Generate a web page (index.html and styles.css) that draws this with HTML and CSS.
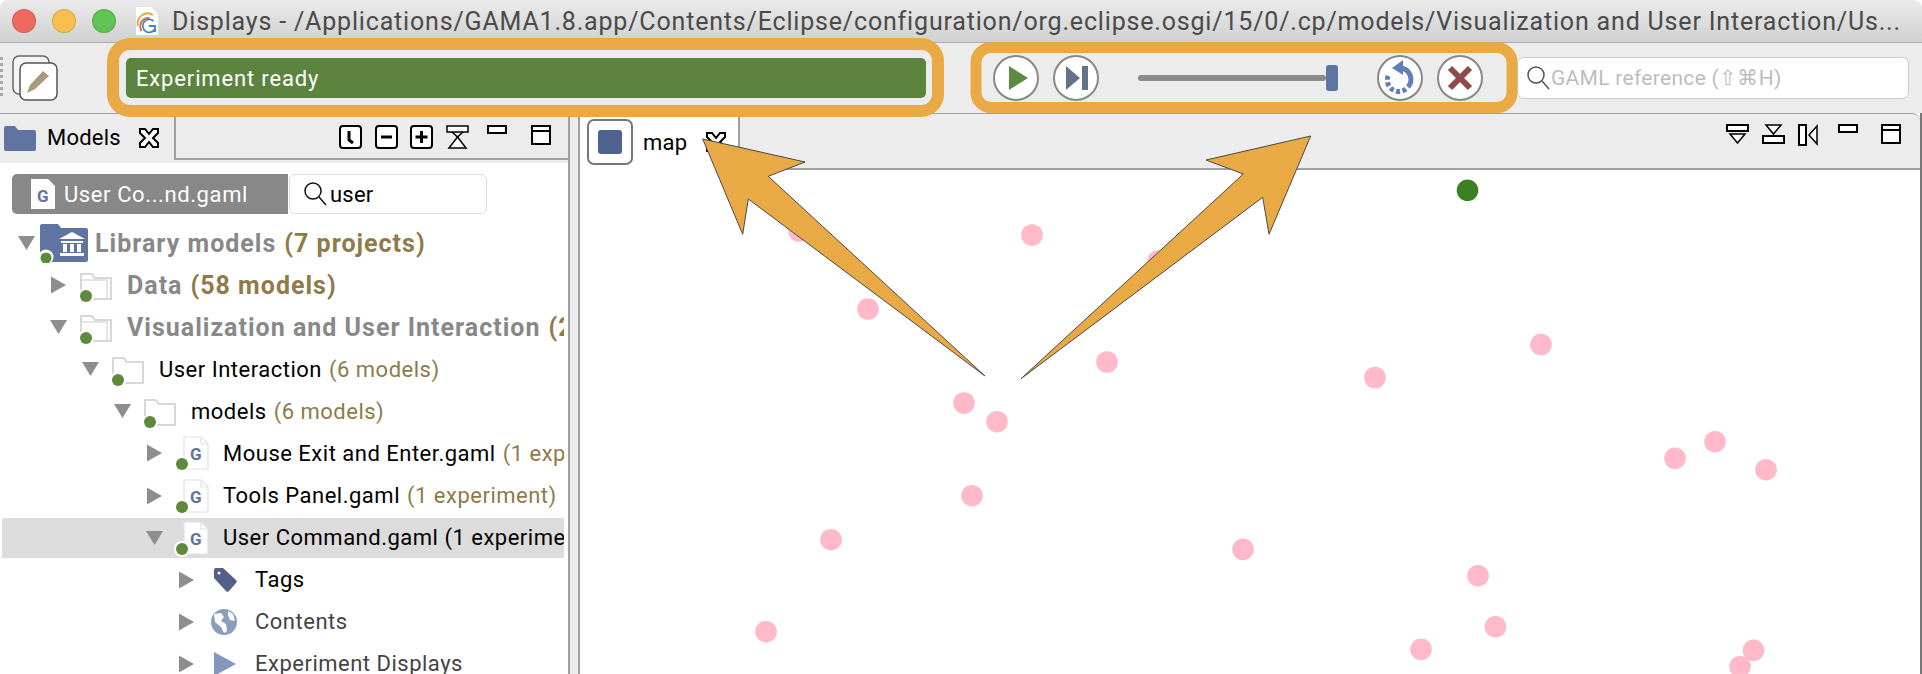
FILE: index.html
```html
<!DOCTYPE html>
<html lang="en">
<head>
<meta charset="utf-8">
<title>Displays</title>
<link rel="stylesheet" href="styles.css">
</head>
<body>
<svg class="defs" width="0" height="0" aria-hidden="true">
  <defs>
    <symbol id="x" viewBox="0 0 22 22"><path d="M2 2h5l4 5 4-5h5v4l-5 5 5 5v4h-5l-4-5-4 5H2v-4l5-5-5-5z" fill="#fff" stroke="#000" stroke-width="2"/></symbol>
    <symbol id="tw-open" viewBox="0 0 24 40"><path d="M3 13h17l-8.500 14z" fill="#8e8e8e"/></symbol>
    <symbol id="tw-closed" viewBox="0 0 24 40"><path d="M4 11.500l15 8.500-15 8.500z" fill="#8e8e8e"/></symbol>
    <symbol id="dot" viewBox="0 0 56 40"><circle cx="15" cy="31" r="8" fill="#fff"/><circle cx="15" cy="31" r="6" fill="#5e8a3c"/></symbol>
    <symbol id="folder" viewBox="0 0 56 40"><path d="M10 30V9h11l2.500 4H40v21H20" fill="#fff" stroke="#ccc" stroke-width="1.500"/></symbol>
    <symbol id="folder2" viewBox="0 0 56 40"><path d="M10 30V9h11l2.500 4H40v21H20" fill="#fff" stroke="#ccc" stroke-width="1.500"/><path d="M11 15h25v18" fill="none" stroke="#ddd" stroke-width="1.500"/></symbol>
    <symbol id="page" viewBox="0 0 56 40"><path d="M17 4h17l7 7v25H17z" fill="#fff" stroke="#dfe2e8" stroke-width="1.200"/><path d="M34 4v7h7" fill="none" stroke="#dfe2e8" stroke-width="1.200"/></symbol>
  </defs>
</svg>
<div class="window">
  <header class="titlebar">
    <div class="lights"><span class="light red"></span><span class="light yellow"></span><span class="light green"></span></div>
    <svg class="app-icon" width="24" height="28" viewBox="0 0 24 28">
      <path d="M1 0h15l7 7v21H1z" fill="#fff"/>
      <path d="M3 19a10 10 0 0 1 15-11" fill="none" stroke="#e9a23c" stroke-width="1.800"/>
      <path d="M6.500 24a10 10 0 0 1-1-7 9 9 0 0 1 9-6" fill="none" stroke="#d8693a" stroke-width="1.800"/>
      <path d="M20 22a6.500 6.500 0 1 1-1.500-8" fill="none" stroke="#3f83c0" stroke-width="1.800"/>
      <path d="M14 19h6v6" fill="none" stroke="#3f83c0" stroke-width="1.800"/>
    </svg>
    <span class="title">Displays - /Applications/GAMA1.8.app/Contents/Eclipse/configuration/org.eclipse.osgi/15/0/.cp/models/Visualization and User Interaction/Us...</span>
  </header>

  <div class="toolbar">
    <span class="grip"></span>
    <svg class="perspective" width="46" height="46" viewBox="0 0 46 46">
      <rect x="1" y="1" width="36" height="38" rx="6" fill="#f4f4f4" stroke="#666" stroke-width="1.500"/>
      <rect x="8" y="8" width="37" height="37" rx="6" fill="#fff" stroke="#555" stroke-width="1.500"/>
      <path d="M15 38l3-8 13-14 6 5-14 13z" fill="#a8997f"/>
    </svg>
    <div class="status">Experiment ready</div>
    <button class="round first" type="button" aria-label="Run">
      <svg viewBox="0 0 46 46"><circle cx="23" cy="23" r="22" fill="#fff" stroke="#888" stroke-width="2"/><path d="M16 11l19 12-19 12z" fill="#5c8a3f"/></svg>
    </button>
    <button class="round" type="button" aria-label="Step">
      <svg viewBox="0 0 46 46"><circle cx="23" cy="23" r="22" fill="#fff" stroke="#888" stroke-width="2"/><path d="M13 11l14 12-14 12z" fill="#637488"/><rect x="29" y="11" width="6" height="24" fill="#637488"/></svg>
    </button>
    <div class="slider"><span class="track"></span><span class="thumb"></span></div>
    <button class="round reload" type="button" aria-label="Reload">
      <svg viewBox="0 0 46 46"><circle cx="23" cy="23" r="22" fill="#fff" stroke="#888" stroke-width="2"/><path d="M24 13a11.500 11.500 0 0 1 7 19" fill="none" stroke="#5f7fb5" stroke-width="5"/><path d="M29 34a11.500 11.500 0 0 1-17-15" fill="none" stroke="#5f7fb5" stroke-width="5" stroke-dasharray="4 2.500"/><path d="M26 5v15l-11-7z" fill="#5f7fb5"/></svg>
    </button>
    <button class="round" type="button" aria-label="Stop">
      <svg viewBox="0 0 46 46"><circle cx="23" cy="23" r="22" fill="#fff" stroke="#888" stroke-width="2"/><path d="M13 13l20 20M33 13L13 33" stroke="#8f4a4a" stroke-width="6"/></svg>
    </button>
    <div class="search-box">
      <svg width="24" height="26" viewBox="0 0 24 26"><circle cx="10" cy="10" r="8" fill="none" stroke="#555" stroke-width="1.500"/><path d="M16 16l7 8" stroke="#555" stroke-width="1.500"/></svg>
      <span>GAML reference (⇧⌘H)</span>
    </div>
  </div>

  <div class="panes">
    <section class="left">
      <div class="tabbar">
        <div class="tab models-tab">
          <svg width="32" height="26" viewBox="0 0 32 26"><path d="M0 3a2 2 0 0 1 2-2h9l3 4h16a2 2 0 0 1 2 2v17a2 2 0 0 1-2 2H2a2 2 0 0 1-2-2z" fill="#5f74a0"/></svg>
          <span class="tab-label">Models</span>
          <svg class="tab-x" width="22" height="22"><use href="#x"/></svg>
        </div>
        <div class="view-tools">
          <svg class="vt" width="23" height="24" viewBox="0 0 23 24"><rect x="1" y="1" width="21" height="22" rx="3" fill="#fff" stroke="#000" stroke-width="2"/><path d="M10 6v9l4 3" fill="none" stroke="#000" stroke-width="3"/></svg>
          <svg class="vt" width="23" height="24" viewBox="0 0 23 24"><rect x="1" y="1" width="21" height="22" rx="3" fill="#fff" stroke="#000" stroke-width="2"/><path d="M6 12h11" stroke="#000" stroke-width="3"/></svg>
          <svg class="vt" width="23" height="24" viewBox="0 0 23 24"><rect x="1" y="1" width="21" height="22" rx="3" fill="#fff" stroke="#000" stroke-width="2"/><path d="M5.500 12h12M11.500 6v12" stroke="#000" stroke-width="3"/></svg>
          <svg class="vt" width="23" height="24" viewBox="0 0 23 24"><rect x="1" y="1" width="21" height="6" fill="#fff" stroke="#000" stroke-width="1.500"/><path d="M11.500 12L20 23H3z" fill="#fff" stroke="#000" stroke-width="1.500"/><path d="M6 7l5.500 5L17 7" fill="none" stroke="#000" stroke-width="1.500"/></svg>
          <svg class="vt-min" width="20" height="9" viewBox="0 0 20 9"><rect x="1" y="1" width="18" height="7" fill="#fff" stroke="#000" stroke-width="2"/></svg>
          <svg class="vt-max" width="20" height="20" viewBox="0 0 20 20"><rect x="1" y="1" width="18" height="18" fill="#fff" stroke="#000" stroke-width="2"/><path d="M1 6h18" stroke="#000" stroke-width="2"/></svg>
        </div>
      </div>
      <div class="left-body">
        <div class="selector">
          <div class="crumb">
            <svg width="26" height="32" viewBox="0 0 26 32"><path d="M1 1h17l7 7v23H1z" fill="#fff"/><text class="g" x="13" y="24" text-anchor="middle">G</text></svg>
            <span>User Co...nd.gaml</span>
          </div>
          <div class="filter">
            <svg width="24" height="26" viewBox="0 0 24 26"><circle cx="10" cy="10" r="8" fill="none" stroke="#111" stroke-width="1.500"/><path d="M16 16l7 8" stroke="#111" stroke-width="1.500"/></svg>
            <span>user</span>
          </div>
        </div>
        <div class="tree">
          <div class="row d0 strong"><svg class="tw"><use href="#tw-open"/></svg>
            <svg class="ic" viewBox="0 0 56 40"><path d="M1 3a2 2 0 0 1 2-2h16l3 4h25a2 2 0 0 1 2 2v30a2 2 0 0 1-2 2H3a2 2 0 0 1-2-2z" fill="#5f74a0"/><path d="M20 16l13-7 13 7zM22 18h22v2H22zM24 21h4v8h-4zM31 21h4v8h-4zM38 21h4v8h-4zM21 30h24v3H21z" fill="#fff"/><circle cx="7" cy="34" r="7.500" fill="#fff"/><circle cx="7" cy="35" r="5.500" fill="#5e8a3c"/></svg>
            <span class="name">Library models</span> <span class="count">(7 projects)</span></div>
          <div class="row d1 strong"><svg class="tw"><use href="#tw-closed"/></svg>
            <svg class="ic"><use href="#folder2"/><use href="#dot"/></svg>
            <span class="name">Data</span> <span class="count">(58 models)</span></div>
          <div class="row d1 strong"><svg class="tw"><use href="#tw-open"/></svg>
            <svg class="ic"><use href="#folder2"/><use href="#dot"/></svg>
            <span class="name">Visualization and User Interaction</span> <span class="count">(2</span></div>
          <div class="row d2"><svg class="tw"><use href="#tw-open"/></svg>
            <svg class="ic"><use href="#folder"/><use href="#dot"/></svg>
            <span class="name">User Interaction</span> <span class="count">(6 models)</span></div>
          <div class="row d3"><svg class="tw"><use href="#tw-open"/></svg>
            <svg class="ic"><use href="#folder"/><use href="#dot"/></svg>
            <span class="name">models</span> <span class="count">(6 models)</span></div>
          <div class="row d4"><svg class="tw"><use href="#tw-closed"/></svg>
            <svg class="ic" viewBox="0 0 56 40"><use href="#page" width="56" height="40"/><text class="g" x="29" y="27" text-anchor="middle">G</text><use href="#dot" width="56" height="40"/></svg>
            <span class="name">Mouse Exit and Enter.gaml</span> <span class="count">(1 experiment)</span></div>
          <div class="row d4"><svg class="tw"><use href="#tw-closed"/></svg>
            <svg class="ic" viewBox="0 0 56 40"><use href="#page" width="56" height="40"/><text class="g" x="29" y="27" text-anchor="middle">G</text><use href="#dot" width="56" height="40"/></svg>
            <span class="name">Tools Panel.gaml</span> <span class="count">(1 experiment)</span></div>
          <div class="row d4 selected"><svg class="tw"><use href="#tw-open"/></svg>
            <svg class="ic" viewBox="0 0 56 40"><use href="#page" width="56" height="40"/><text class="g" x="29" y="27" text-anchor="middle">G</text><use href="#dot" width="56" height="40"/></svg>
            <span class="name">User Command.gaml (1 experiment)</span></div>
          <div class="row d5"><svg class="tw"><use href="#tw-closed"/></svg>
            <svg class="ic" viewBox="0 0 56 40"><path d="M15 10a2 2 0 0 1 2-2h7l13 12a2 2 0 0 1 0 3l-7 8a2 2 0 0 1-3 0L15 18z" fill="#525f88"/><circle cx="20" cy="13" r="1.500" fill="#fff"/></svg>
            <span class="name">Tags</span></div>
          <div class="row d5"><svg class="tw"><use href="#tw-closed"/></svg>
            <svg class="ic" viewBox="0 0 56 40"><circle cx="25" cy="20" r="13" fill="#8c9cbd"/><path d="M15 12l7-1 3 4-3 4 5 3 1 7-3 2-3-6-6-5zM29 9l5 3 2 7-5-1-2-5z" fill="#fff"/></svg>
            <span class="name dim">Contents</span></div>
          <div class="row d5"><svg class="tw"><use href="#tw-closed"/></svg>
            <svg class="ic" viewBox="0 0 56 40"><path d="M15 8l22 12-22 12z" fill="#8596bb"/></svg>
            <span class="name dim">Experiment Displays</span></div>
        </div>
      </div>
    </section>
    <div class="sash"></div>
    <section class="right">
      <div class="tabbar map-bar">
        <div class="tab map-tab">
          <span class="map-icon"><span class="map-square"></span></span>
          <span class="tab-label">map</span>
          <svg class="tab-x" width="22" height="22"><use href="#x"/></svg>
        </div>
        <div class="view-tools map-tools">
          <svg class="vt" width="23" height="20" viewBox="0 0 23 20"><path d="M1 1h21v6H1z" fill="#fff" stroke="#000" stroke-width="2"/><path d="M4 10h15l-7.500 9z" fill="#fff" stroke="#000" stroke-width="1.500"/></svg>
          <svg class="vt" width="23" height="20" viewBox="0 0 23 20"><path d="M4 1h15l-7.500 9z" fill="#fff" stroke="#000" stroke-width="1.500"/><path d="M1 12h21v7H1z" fill="#fff" stroke="#000" stroke-width="2"/></svg>
          <svg class="vt" width="21" height="22" viewBox="0 0 21 22"><path d="M1 1h7v20H1z" fill="#fff" stroke="#000" stroke-width="2"/><path d="M19 2v18l-8-9z" fill="#fff" stroke="#000" stroke-width="1.500"/></svg>
          <svg class="vt-min" width="20" height="9" viewBox="0 0 20 9"><rect x="1" y="1" width="18" height="7" fill="#fff" stroke="#000" stroke-width="2"/></svg>
          <svg class="vt-max" width="20" height="20" viewBox="0 0 20 20"><rect x="1" y="1" width="18" height="18" fill="#fff" stroke="#000" stroke-width="2"/><path d="M1 6h18" stroke="#000" stroke-width="2"/></svg>
        </div>
      </div>
      <svg class="map" viewBox="580 170 1340 504" preserveAspectRatio="xMinYMin meet">
        <g fill="#ffb9c8">
          <circle cx="799" cy="231" r="10.800"/><circle cx="1032" cy="235" r="10.800"/><circle cx="1158" cy="261" r="10.800"/>
          <circle cx="868" cy="309" r="10.800"/><circle cx="1107" cy="362" r="10.800"/><circle cx="1375" cy="377.500" r="10.800"/>
          <circle cx="1541" cy="344.500" r="10.800"/><circle cx="964" cy="403" r="10.800"/><circle cx="997" cy="421.700" r="10.800"/>
          <circle cx="972" cy="495.700" r="10.800"/><circle cx="831" cy="539.700" r="10.800"/><circle cx="1243" cy="549.300" r="10.800"/>
          <circle cx="1478" cy="575.700" r="10.800"/><circle cx="766" cy="631.700" r="10.800"/><circle cx="1495.500" cy="626.700" r="10.800"/>
          <circle cx="1421" cy="649.300" r="10.800"/><circle cx="1753.500" cy="650.300" r="10.800"/><circle cx="1740" cy="666.700" r="10.800"/>
          <circle cx="1675" cy="458.300" r="10.800"/><circle cx="1715" cy="441.700" r="10.800"/><circle cx="1766" cy="469.700" r="10.800"/>
        </g>
        <circle cx="1467.500" cy="190.300" r="10.800" fill="#3b8122"/>
      </svg>
    </section>
  </div>

  <svg class="annotations" width="1922" height="674" viewBox="0 0 1922 674" aria-hidden="true">
    <rect x="113" y="44" width="825" height="67" rx="17" class="ring"/>
    <rect x="976" y="47.500" width="536" height="60" rx="15" class="ring thin"/>
    <path class="arrow" d="M702.700 139L805 162L768.300 176.300L985 376L748.300 199L742.700 234.300Z"/>
    <path class="arrow" d="M1021 378.700L1243.300 174L1206 160L1310.700 136L1269 234.300L1262.700 197.300Z"/>
  </svg>
</div>
</body>
</html>
```
FILE: styles.css
```css
* { box-sizing: border-box; }
html, body { margin: 0; padding: 0; background: #fff; overflow: hidden; }
body { font-family: Roboto, "Liberation Sans", sans-serif; color: #000; }
.defs { position: absolute; }
svg { display: block; flex: none; }

.window { position: relative; width: 1922px; height: 674px; overflow: hidden; display: flex; flex-direction: column; }

/* title bar */
.titlebar { height: 43px; flex: none; display: flex; align-items: center; padding-left: 12px; background: linear-gradient(#ebebeb, #d0d0d0); border-bottom: 1px solid #b0b0b0; border-radius: 8px 8px 0 0; }
.lights { display: flex; gap: 16px; }
.light { width: 24px; height: 24px; border-radius: 50%; border: 1px solid rgba(0,0,0,.12); }
.red { background: #ee6a5f; }
.yellow { background: #f6be4f; }
.green { background: #61c454; }
.app-icon { margin-left: 19px; }
.title { margin-left: 13px; font-size: 25px; color: #4a4a4a; white-space: nowrap; letter-spacing: .82px; }

/* main toolbar */
.toolbar { height: 70px; flex: none; display: flex; align-items: center; background: #ececec; }
.grip { width: 3px; height: 42px; margin-right: 9px; background: repeating-linear-gradient(#aaa 0 3px, transparent 3px 6px); }
.status { width: 800px; height: 40px; margin-left: 68px; padding-left: 10px; display: flex; align-items: center; background: #5c843f; border-radius: 5px; color: #fff; font-size: 22px; letter-spacing: .85px; }
.round { width: 46px; height: 46px; padding: 0; border: 0; background: none; flex: none; margin-left: 14px; }
.round svg { width: 46px; height: 46px; }
.round.first { margin-left: 67px; }
.round.reload { margin-left: 39px; }
.slider { width: 200px; height: 26px; margin-left: 39px; display: flex; align-items: center; }
.track { width: 188px; height: 6px; background: #8a8a8a; border-radius: 3px; }
.thumb { width: 12px; height: 26px; background: #5f74a0; border-radius: 3px; }
.search-box { width: 392px; height: 42px; margin-left: 34px; padding-left: 8px; display: flex; align-items: center; gap: 1px; background: #fff; border: 1px solid #ccc; border-radius: 7px; color: #bdbdbd; font-size: 21px; letter-spacing: .3px; }

/* panes */
.panes { flex: 1; display: flex; min-height: 0; }
.left { width: 568px; flex: none; display: flex; flex-direction: column; min-height: 0; }
.sash { width: 12px; flex: none; background: #ececec; border-left: 2px solid #a0a0a0; border-right: 2px solid #a0a0a0; }
.right { flex: 1; display: flex; flex-direction: column; min-width: 0; border-right: 2px solid #777; }

.tabbar { height: 50px; flex: none; display: flex; background: #ececec; border-top: 1px solid #a0a0a0; }
.tab { display: flex; align-items: center; flex: none; }
.models-tab { width: 176px; padding: 1px 0 0 4px; border-right: 2px solid #a0a0a0; margin-bottom: 3px; }
.tab-label { font-size: 22px; letter-spacing: .2px; }
.models-tab .tab-label { margin-left: 11px; }
.models-tab .tab-x { margin-left: 17px; }
.view-tools { flex: 1; display: flex; align-items: flex-start; padding-top: 11px; padding-left: 163px; border-bottom: 2px solid #a0a0a0; margin-bottom: 3px; }
.vt { margin-right: 12.500px; }
.vt-min { margin-left: 6px; }
.vt-max { margin-left: 24px; }

.left-body { flex: 1; min-height: 0; background: #fff; overflow: hidden; padding-top: 11px; }
.selector { display: flex; padding-left: 12px; height: 40px; }
.crumb { width: 276px; display: flex; align-items: center; padding-left: 18px; gap: 8px; background: #888; border-radius: 5px 0 0 5px; color: #fff; font-size: 22px; letter-spacing: .6px; }
.filter { width: 198px; margin-left: 1px; display: flex; align-items: center; gap: 3px; padding-left: 13px; background: #fff; border: 1px solid #ddd; border-radius: 6px; font-size: 22px; letter-spacing: .2px; }

.tree { margin: 9px 4px 0 2px; display: flex; flex-direction: column; gap: 2.100px; overflow: hidden; height: 460px; }
.row { height: 40px; flex: none; display: flex; align-items: center; font-size: 22px; letter-spacing: .5px; white-space: nowrap; overflow: hidden; }
.d0 { padding-left: 13px; }
.d1 { padding-left: 45px; }
.d2 { padding-left: 77px; }
.d3 { padding-left: 109px; }
.d4 { padding-left: 141px; }
.d5 { padding-left: 173px; }
.tw { width: 24px; height: 40px; }
.ic { width: 56px; height: 40px; }
.name { margin-right: 7px; }
.strong { font-weight: 700; font-size: 25px; letter-spacing: 1px; }
.strong .name { color: #888; margin-right: 8px; }
.count { color: #8f7a4a; }
.dim { color: #444; }
.selected { background: #dcdcdc; }
.g { font: 700 17px Roboto, sans-serif; fill: #5f74a0; }

/* map view */
.map-bar { height: 57px; border-radius: 0 8px 0 0; }
.map-tab { width: 160px; padding-left: 7px; border-right: 2px solid #a0a0a0; background: #fff; }
.map-icon { width: 46px; height: 46px; border: 2px solid #777; border-radius: 7px; background: #fff; display: flex; align-items: center; justify-content: center; flex: none; }
.map-square { width: 24px; height: 24px; background: #4f638f; border-radius: 3px; }
.map-tab .tab-label { margin-left: 10px; }
.map-tab .tab-x { margin-left: 18px; }
.map-tools { padding-left: 986px; margin-bottom: 0; padding-top: 10px; }
.map-tools .vt { margin-right: 13px; }
.map-tools .vt-min { margin-left: 6px; }
.map-tools .vt-max { margin-left: 23px; }
.map { width: 1340px; height: 504px; flex: none; }

/* annotation overlay */
.annotations { position: absolute; left: 0; top: 0; pointer-events: none; }
.ring { fill: none; stroke: #e9a945; stroke-width: 12; }
.ring.thin { stroke-width: 11; }
.arrow { fill: #e9a945; stroke: #4a4a4a; stroke-width: 1; stroke-linejoin: miter; }
```
